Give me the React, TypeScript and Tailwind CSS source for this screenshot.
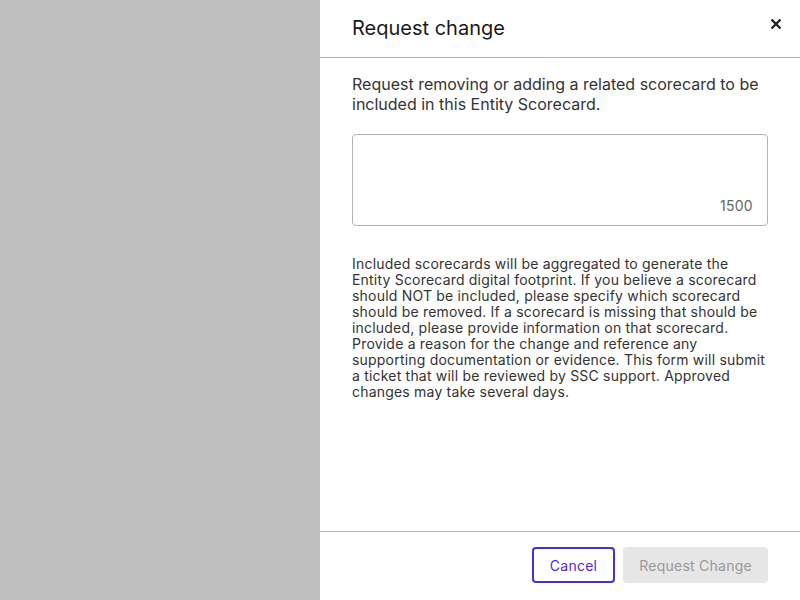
import { useState } from 'react';

export default function App() {
  const [reason, setReason] = useState('');
  const maxLength = 1500;

  return (
    <div className="flex h-[600px] w-[800px] bg-[#bfbfbf] font-['Inter',sans-serif] text-[#1a1a1a]">
      <div className="flex-1" />

      {/* Drawer */}
      <div className="flex h-full w-[480px] flex-col bg-white">
        {/* Header */}
        <div className="flex h-[58px] shrink-0 items-start justify-between border-b border-[#b3b3b3] pl-8 pr-[14px]">
          <h2 className="pt-[14px] text-[20px] leading-7 text-[#1a1a1a]">Request change</h2>
          <button className="mt-[14px] flex h-5 w-5 items-center justify-center text-[#1a1a1a]">
            <svg width="12" height="12" viewBox="0 0 12 12" fill="none">
              <path d="M1.5 1.5L10.5 10.5M10.5 1.5L1.5 10.5" stroke="currentColor" strokeWidth="2.2" />
            </svg>
          </button>
        </div>

        {/* Body */}
        <div className="flex-1 px-8 pt-[16px]">
          <p className="text-[16px] leading-5 text-[#333]">
            Request removing or adding a related scorecard to be included in this Entity Scorecard.
          </p>

          <div className="relative mt-[20px] h-[92px] rounded border border-[#b3b3b3]">
            <textarea
              value={reason}
              onChange={(e) => setReason(e.target.value)}
              maxLength={maxLength}
              className="h-full w-full resize-none rounded bg-transparent px-4 py-3 text-sm outline-none"
            />
            <span className="absolute bottom-[11px] right-[14px] text-sm leading-4 tracking-[0.3px] text-[#666]">
              {maxLength - reason.length}
            </span>
          </div>

          <p className="mt-[30px] text-[14px] leading-4 tracking-[0.2px] text-[#333]">
            Included scorecards will be aggregated to generate the Entity Scorecard digital footprint. If you
            believe a scorecard should NOT be included, please specify which scorecard should be removed. If a
            scorecard is missing that should be included, please provide information on that scorecard. Provide a
            reason for the change and reference any supporting documentation or evidence. This form will submit a
            ticket that will be reviewed by SSC support. Approved changes may take several days.
          </p>
        </div>

        {/* Footer */}
        <div className="flex h-[69px] shrink-0 items-center justify-end gap-2 border-t border-[#b3b3b3] px-8 pb-[2px]">
          <button className="h-9 rounded border-2 border-[#4c2bdb] px-4 text-[14px] tracking-[0.25px] text-[#4c2bdb]">
            Cancel
          </button>
          <button disabled className="h-9 rounded bg-[#e6e6e6] px-4 text-[14px] tracking-[0.25px] text-[#999]">
            Request Change
          </button>
        </div>
      </div>
    </div>
  );
}
